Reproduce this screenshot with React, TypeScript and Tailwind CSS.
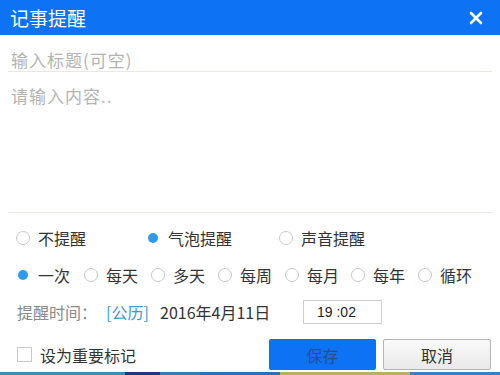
import React from "react";

const font = { fontFamily: '"Noto Sans CJK SC", "Noto Sans", sans-serif' };

function Radio({ checked, label, w }: { checked?: boolean; label: string; w: string }) {
  return (
    <div className={`flex items-center ${w}`}>
      {checked ? (
        <span className="w-[14px] h-[14px] rounded-full flex items-center justify-center">
          <span className="w-[10px] h-[10px] rounded-full bg-[#2e9bf0]" />
        </span>
      ) : (
        <span className="w-[14px] h-[14px] rounded-full border border-[#c8c8c8] bg-white" />
      )}
      <span className="ml-[8px] text-[16px] leading-[20px] text-[#333]">{label}</span>
    </div>
  );
}

export default function App() {
  return (
    <div className="w-[500px] h-[375px] bg-white flex flex-col overflow-hidden" style={font}>
      <div className="h-[35px] bg-[#0e72f4] flex items-center justify-between pl-[10px] pr-[17px] shrink-0">
        <span className="text-white text-[19px] leading-[24px]">记事提醒</span>
        <svg width="14" height="14" viewBox="0 0 14 14">
          <path d="M2 2 L12 12 M12 2 L2 12" stroke="white" strokeWidth="2.6" strokeLinecap="round" />
        </svg>
      </div>
      <div className="flex-1 flex flex-col px-[8px]">
        <div className="h-[37px] flex items-end pb-[1px] pl-[3px] border-b border-[#ebe8e0] shrink-0">
          <span className="text-[17px] leading-[20px] tracking-[1px] text-[#b4b4b4]">输入标题(可空)</span>
        </div>
        <div className="h-[141px] pt-[12px] pl-[3px] border-b border-[#ebe8e0] shrink-0">
          <span className="text-[17px] leading-[20px] tracking-[1px] text-[#b4b4b4]">请输入内容..</span>
        </div>
        <div className="mt-[12px] h-[26px] flex items-center pl-[8px]">
          <Radio label="不提醒" w="w-[130px]" />
          <Radio label="气泡提醒" checked w="w-[133px]" />
          <Radio label="声音提醒" w="w-[133px]" />
        </div>
        <div className="mt-[11px] h-[26px] flex items-center pl-[8px]">
          <Radio label="一次" checked w="w-[68px]" />
          <Radio label="每天" w="w-[67px]" />
          <Radio label="多天" w="w-[67px]" />
          <Radio label="每周" w="w-[67px]" />
          <Radio label="每月" w="w-[66px]" />
          <Radio label="每年" w="w-[67px]" />
          <Radio label="循环" w="w-[67px]" />
        </div>
        <div className="mt-[11px] h-[26px] flex items-center pl-[9px] text-[16px] leading-[20px]">
          <span className="text-[#8a8a8a] w-[89px]">提醒时间：</span>
          <span className="text-[#3c9ad6] w-[54px]">[公历]</span>
          <span className="text-[#333] w-[143px]">2016年4月11日</span>
          <div className="w-[79px] h-[24px] border border-[#cfcfcf] flex items-center pl-[13px] text-[14px] text-[#222]" style={{ fontFamily: '"Liberation Sans", sans-serif' }}>
            19 :02
          </div>
        </div>
        <div className="mt-[14px] h-[31px] flex items-center">
          <div className="flex items-center pl-[9px] w-[261px]">
            <span className="w-[15px] h-[15px] border border-[#c8c8c8] bg-white" />
            <span className="ml-[8px] text-[16px] leading-[20px] text-[#333]">设为重要标记</span>
          </div>
          <div className="w-[107px] h-[31px] bg-[#0e72f4] rounded-[2px] flex items-center justify-center text-[16px] text-[#25508f]">
            保存
          </div>
          <div className="ml-[7px] w-[108px] h-[31px] rounded-[2px] border border-[#b5b5b5] bg-gradient-to-b from-[#fafafa] to-[#e9e9e9] flex items-center justify-center text-[16px] text-[#333]">
            取消
          </div>
        </div>
      </div>
      <div className="h-[3px] flex shrink-0">
        <div className="w-[125px] bg-[#3f8ea5]" />
        <div className="w-[35px] bg-[#1d3a78]" />
        <div className="w-[40px] bg-[#3a7aa8]" />
        <div className="w-[80px] bg-[#2f6fb5]" />
        <div className="w-[130px] bg-[#b8b060]" />
        <div className="flex-1 bg-[#3a80c0]" />
      </div>
    </div>
  );
}
